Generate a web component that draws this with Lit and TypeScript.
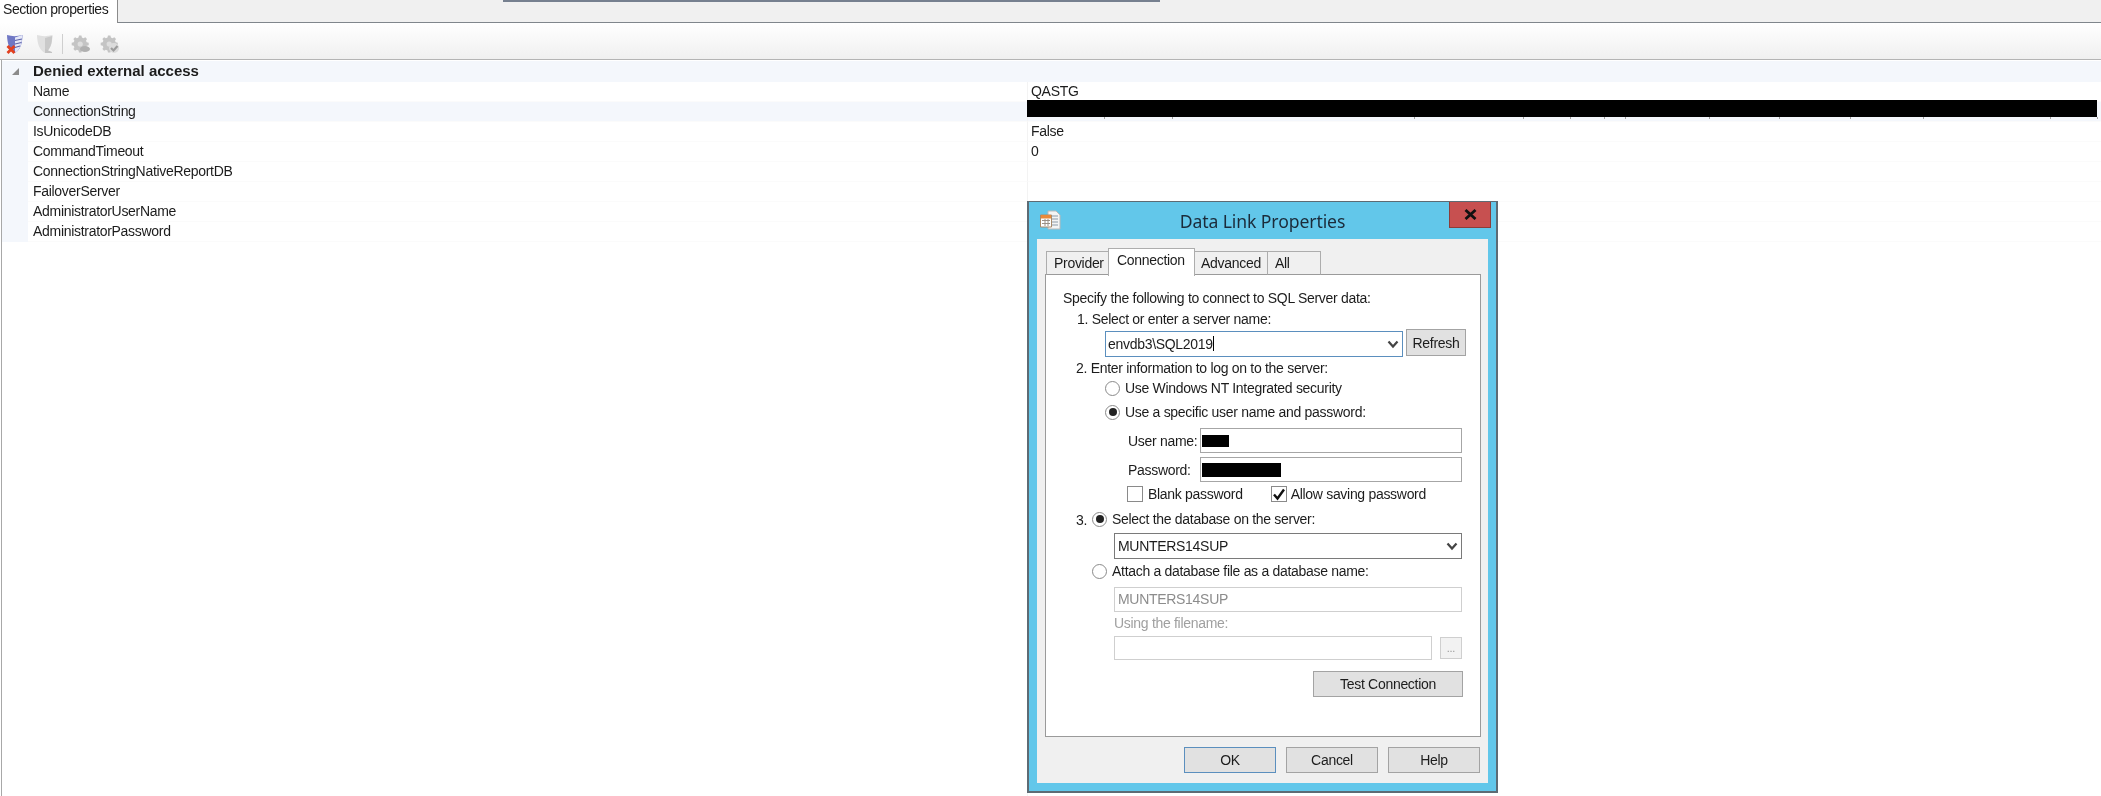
import { LitElement, html, css, svg } from "lit";
import { customElement } from "lit/decorators.js";

const ROWS: [string, string][] = [
  ["Name", "QASTG"],
  ["ConnectionString", ""],
  ["IsUnicodeDB", "False"],
  ["CommandTimeout", "0"],
  ["ConnectionStringNativeReportDB", ""],
  ["FailoverServer", ""],
  ["AdministratorUserName", ""],
  ["AdministratorPassword", ""],
];
const TICKS = [1104, 1172, 1414, 1523, 1570, 1604, 1625, 1709, 1779, 1850, 1923, 2050, 2097];

const chevron = svg`<svg class="chev" width="12" height="9" viewBox="0 0 12 9"><path d="M1.5 1.5 6 6.5l4.5-5" fill="none" stroke="#444" stroke-width="2.2"/></svg>`;

const gear = (c: string) => svg`<path d="M8 1.5h2.400l.5 2 1.600.7 1.800-1 1.700 1.700-1 1.800.7 1.600 2 .5v2.400l-2 .5-.7 1.600 1 1.800-1.700 1.700-1.800-1-1.600.7-.5 2H8l-.5-2-1.600-.7-1.800 1-1.700-1.700 1-1.800-.7-1.600-2-.5V8.800l2-.5.7-1.600-1-1.800 1.700-1.700 1.800 1 1.600-.7z" fill="${c}"/><circle cx="9.200" cy="10" r="2.600" fill="#dedede"/>`;

@customElement("app-root")
export class AppRoot extends LitElement {
  static styles = css`
    :host {
      display: block;
      position: relative;
      width: 2101px;
      height: 796px;
      overflow: hidden;
      background: #fff;
      font-family: "Liberation Sans", Arial, sans-serif;
      font-size: 14px;
      letter-spacing: -0.3px;
      white-space: nowrap;
      color: #1c1c1c;
      filter: blur(0.45px);
    }
    .page { display: flex; flex-direction: column; height: 796px; }
    .strip { display: flex; height: 23px; flex: none; }
    .tab { width: 114px; padding-left: 3px; line-height: 19px; letter-spacing: -0.42px; background: #fff; border-right: 1px solid #8b8b8b; }
    .stripRest { flex: 1; background: #f0f0f0; border-bottom: 1px solid #80868c; box-shadow: 0 1px 0 #d4d4d4; }
    .behind { margin-left: 385px; width: 657px; height: 2px; background: #76808f; }
    .toolbar {
      flex: none; height: 37px; box-sizing: border-box; display: flex; align-items: center; padding: 5px 0 0 6px;
      background: linear-gradient(#fff, #f0f0f0);
      border-bottom: 1px solid #b4b4b4;
    }
    .toolbar svg { display: block; }
    .mi2 { margin-left: 13px; }
    .mi4 { margin-left: 9px; }
    .sep { width: 1px; height: 20px; background: #cfcfcf; margin: 0 8px 0 9px; }
    .grid { flex: 1; border-left: 1px solid #a8a8a8; margin-left: 1px; display: flex; flex-direction: column; position: relative; }
    .row { display: flex; height: 20px; flex: none; line-height: 19px; }
    .row.sel .cell, .row.head .cell { background: #f4f7fc; }
    .gutter { width: 26px; flex: none; background: #f4f7fc; display: flex; align-items: center; justify-content: center; }
    .cell { box-sizing: border-box; }
    .nameCell { width: 999px; padding-left: 5px; border-bottom: 1px solid #fbfbfb; }
    .valCell { flex: 1; padding-left: 3px; border-left: 1px solid #f3f3f3; border-bottom: 1px solid #fbfbfb; }
    .head { font-weight: 700; font-size: 15px; letter-spacing: 0; height: 21px; margin-top: 1px; line-height: 20px; }
    .head .nameCell { border: none; flex: 1; }
    .redact { position: absolute; left: 1025px; top: 40px; width: 1070px; height: 17px; background: #000; }
    .tick { position: absolute; top: 57px; width: 1px; height: 2px; background: #a0a0a0; }
    .fill { flex: 1; }
    .fill div { margin-left: 1025px; height: 100%; border-left: 1px solid #f5f5f5; }

    .dialog {
      position: absolute; left: 1027px; top: 201px; width: 471px; height: 592px; box-sizing: border-box;
      background: #62c7ea; border: 2px solid #5d6b74; border-top-width: 1px;
      display: flex; flex-direction: column; padding: 0 8px 8px 8px;
    }
    .titlebar { height: 37px; flex: none; display: flex; align-items: center; position: relative; }
    .winIcon { position: absolute; left: 3px; top: 8px; }
    .title { flex: 1; text-align: center; font: 17.6px "Noto Sans", sans-serif; color: #1b2b3a; letter-spacing: -0.1px; }
    .close {
      position: absolute; right: -3px; top: 0; width: 42px; height: 26px; box-sizing: border-box;
      background: #c75050; border: 1px solid #8c3d3a; border-top: none;
      display: flex; align-items: center; justify-content: center;
    }
    .client { flex: 1; background: #f0f0f0; display: flex; flex-direction: column; padding: 9px 7px 0 8px; }
    .tabs { display: flex; height: 27px; align-items: flex-end; flex: none; padding-left: 2px; position: relative; z-index: 1; margin-bottom: -1px; }
    .t { height: 24px; box-sizing: border-box; border: 1px solid #adadad; border-bottom: 1px solid #9a9a9a; line-height: 22px; background: #f0f0f0; padding-left: 7px; margin-left: -1px; }
    .t.p { width: 63px; }
    .t.c { width: 87px; height: 28px; background: #fff; border-bottom: none; line-height: 23px; padding-left: 8px; position: relative; margin-bottom: -1px; }
    .t.a { width: 74px; padding-left: 6px; }
    .t.l { width: 54px; padding-left: 7px; }
    .panel { height: 463px; box-sizing: border-box; background: #fff; border: 1px solid #9a9a9a; padding: 13px 0 0 0; display: flex; flex-direction: column; }
    .line { height: 20px; line-height: 20px; display: flex; align-items: center; flex: none; }
    .l1 { padding-left: 17px; }
    .l2 { padding-left: 30px; }
    .l2b { padding-left: 31px; margin-top: 1px; }
    .l3 { padding-left: 59px; }
    .gap4 { margin-top: 4px; }
    .radio { width: 15px; height: 15px; box-sizing: border-box; border-radius: 50%; border: 1px solid #8a8a8a; background: #fff; display: flex; align-items: center; justify-content: center; margin-right: 5px; flex: none; }
    .radio.on::after { content: ""; width: 8px; height: 8px; border-radius: 50%; background: #222; }
    .combo { box-sizing: border-box; height: 26px; display: flex; align-items: center; justify-content: space-between; background: #fff; padding: 0 3px 0 2px; flex: none; }
    .combo.focus { width: 298px; border: 1px solid #5b8fbe; margin-top: 2px; }
    .combo.db { width: 348px; border: 1px solid #7a7a7a; margin: 4px 0 0 68px; padding-left: 3px; }
    .btn { box-sizing: border-box; background: #e1e1e1; border: 1px solid #a3a3a3; display: flex; align-items: center; justify-content: center; }
    .refresh { width: 60px; height: 27px; margin-left: 3px; }
    .comboRow { display: flex; padding-left: 59px; height: 28px; flex: none; margin-bottom: 1px; }
    .caret { display: inline-block; width: 1px; height: 15px; background: #000; vertical-align: -2px; }
    .field { display: flex; height: 25px; flex: none; align-items: center; padding-left: 82px; }
    .top6 { margin-top: 6px; }
    .top4 { margin-top: 4px; }
    .field label { width: 72px; }
    .input { flex: none; box-sizing: border-box; height: 25px; width: 262px; border: 1px solid #a6a6a6; background: #fff; position: relative; }
    .black { position: absolute; left: 1px; background: #000; }
    .black.u { top: 6px; width: 27px; height: 12px; }
    .black.w { top: 5px; width: 79px; height: 14px; }
    .checks { display: flex; height: 18px; margin-top: 3px; padding-left: 81px; align-items: center; flex: none; }
    .box { width: 16px; height: 16px; box-sizing: border-box; border: 1px solid #8a8a8a; background: #fff; flex: none; margin-right: 5px; display: flex; align-items: center; justify-content: center; }
    .chk2 { margin-left: 28px; margin-right: 4px; }
    .three { margin-top: 6px; padding-left: 30px; }
    .three .n { width: 16px; margin-top: 2px; }
    .attach { margin-top: 2px; padding-left: 46px; }
    .dis { margin: 6px 0 0 68px; width: 348px; height: 25px; box-sizing: border-box; border: 1px solid #cfcfcf; flex: none; color: #8c8c8c; padding-left: 3px; line-height: 23px; }
    .using { color: #a0a0a0; margin: 1px 0 0 68px; }
    .fileRow { display: flex; margin: 3px 0 0 68px; flex: none; height: 24px; }
    .file { width: 318px; height: 24px; box-sizing: border-box; border: 1px solid #cfcfcf; }
    .dots { width: 22px; height: 22px; margin: 1px 0 0 8px; box-sizing: border-box; border: 1px solid #cfcfcf; background: #f2f2f2; color: #999; display: flex; align-items: center; justify-content: center; font-size: 11px; }
    .testRow { display: flex; justify-content: flex-end; margin-top: 11px; padding-right: 17px; flex: none; }
    .test { width: 150px; height: 26px; }
    .actions { display: flex; justify-content: flex-end; gap: 10px; margin-top: 10px; flex: none; padding-right: 1px; }
    .act { width: 92px; height: 26px; }
    .act.ok { border-color: #5b8fbe; }
  `;

  render() {
    return html`
      <div class="page">
        <div class="strip">
          <div class="tab">Section properties</div>
          <div class="stripRest"><div class="behind"></div></div>
        </div>
        <div class="toolbar">
          <svg width="17" height="20" viewBox="0 0 17 20">
            <path d="M1 1c5 1.500 10 1.500 15.500 0-.3 8-1.500 14-7.500 18C3 16 1.300 9 1 1z" fill="#6f77c4"/>
            <path d="M9 3.500 16.200 1c-.2 8-1.500 14-7.200 18z" fill="#e4e7f8"/>
            <path d="M9 6.500l7-1.500M9 10l6.500-1.500M9 13.500l5-1.500" stroke="#5c62a8" stroke-width="1.200"/>
            <path d="M1.500 12l7 7M8.500 12l-7 7" stroke="#e2401f" stroke-width="2.800"/>
          </svg>
          <svg class="mi2" width="17" height="20" viewBox="0 0 17 20">
            <path d="M1 1c5 1.500 10 1.500 15.500 0-.3 8-1.500 14-7.500 18C3 16 1.300 9 1 1z" fill="#e0e0e0"/>
            <path d="M9 4 16.200 2c-.2 7-1.500 13-7.200 17z" fill="#c9c9c9"/>
            <path d="M9 15l7 3v1H9z" fill="#c4c4c4"/>
          </svg>
          <div class="sep"></div>
          <svg width="20" height="20" viewBox="0 0 20 20">${gear("#c4c4c4")}<ellipse cx="14" cy="15" rx="5" ry="3" fill="#b0b0b0"/></svg>
          <svg class="mi4" width="20" height="20" viewBox="0 0 20 20">${gear("#c4c4c4")}<circle cx="14" cy="14" r="5" fill="#dcdcdc"/><path d="M11 14l2.500 2.500 4-4.500" fill="none" stroke="#9c9c9c" stroke-width="2.200"/></svg>
        </div>
        <div class="grid">
          <div class="row head">
            <div class="gutter"><svg width="9" height="9" viewBox="0 0 9 9"><path d="M8 1v7H1z" fill="#8b8b8b"/></svg></div>
            <div class="cell nameCell">Denied external access</div>
          </div>
          ${ROWS.map(
            ([n, v], i) => html`<div class="row ${i === 1 ? "sel" : ""}">
              <div class="gutter"></div>
              <div class="cell nameCell">${n}</div>
              <div class="cell valCell">${v}</div>
            </div>`
          )}
          <div class="fill"><div></div></div>
          ${TICKS.map((x) => html`<div class="tick" style="left:${x - 2}px"></div>`)}
          <div class="redact"></div>
        </div>
      </div>

      <div class="dialog">
        <div class="titlebar">
          <svg class="winIcon" width="21" height="21" viewBox="0 0 21 21">
            <path d="M8 1h8l4 4v14H8z" fill="#f4f4f4" stroke="#b9b9b9"/>
            <path d="M11 6h7M11 9h7M11 12h7M11 15h7" stroke="#8c9aa8"/>
            <path d="M0.500 5h11v12h-11z" fill="#fff" stroke="#a98a6a" stroke-width="1"/>
            <path d="M1 5h10v3.500H1z" fill="#ea8a3a"/>
            <path d="M2 10.500h8M2 13.500h8M5 9v7M8 9v7" stroke="#9a8f85"/>
          </svg>
          <div class="title">Data Link Properties</div>
          <div class="close">
            <svg width="13" height="11" viewBox="0 0 13 11"><path d="M1.500 1l10 9M11.500 1l-10 9" stroke="#111" stroke-width="2.800"/></svg>
          </div>
        </div>
        <div class="client">
          <div class="tabs">
            <div class="t p">Provider</div>
            <div class="t c">Connection</div>
            <div class="t a">Advanced</div>
            <div class="t l">All</div>
          </div>
          <div class="panel">
            <div class="line l1">Specify the following to connect to SQL Server data:</div>
            <div class="line l2b">1. Select or enter a server name:</div>
            <div class="comboRow">
              <div class="combo focus"><span>envdb3\\SQL2019<i class="caret"></i></span>${chevron}</div>
              <div class="btn refresh">Refresh</div>
            </div>
            <div class="line l2">2. Enter information to log on to the server:</div>
            <div class="line l3"><span class="radio"></span>Use Windows NT Integrated security</div>
            <div class="line l3 gap4"><span class="radio on"></span>Use a specific user name and password:</div>
            <div class="field top6"><label>User name:</label><div class="input"><div class="black u"></div></div></div>
            <div class="field top4"><label>Password:</label><div class="input"><div class="black w"></div></div></div>
            <div class="checks">
              <span class="box"></span><span>Blank password</span>
              <span class="box chk2"><svg width="14" height="13" viewBox="0 0 14 13"><path d="M2 6.500l3.500 4L12 1.500" fill="none" stroke="#111" stroke-width="2.400"/></svg></span><span>Allow saving password</span>
            </div>
            <div class="line three"><span class="n">3.</span><span class="radio on"></span>Select the database on the server:</div>
            <div class="combo db"><span>MUNTERS14SUP</span>${chevron}</div>
            <div class="line attach"><span class="radio"></span><span>Attach a database file as a database name:</span></div>
            <div class="dis">MUNTERS14SUP</div>
            <div class="line using">Using the filename:</div>
            <div class="fileRow"><div class="file"></div><div class="dots">...</div></div>
            <div class="testRow"><div class="btn test">Test Connection</div></div>
          </div>
          <div class="actions">
            <div class="btn act ok">OK</div>
            <div class="btn act">Cancel</div>
            <div class="btn act">Help</div>
          </div>
        </div>
      </div>
    `;
  }
}
